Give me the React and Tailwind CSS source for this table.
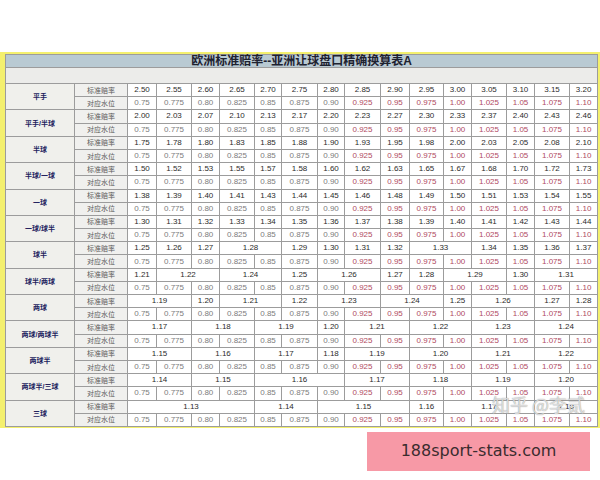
import React from "react";

const water = ["0.75", "0.775", "0.80", "0.825", "0.85", "0.875", "0.90", "0.925", "0.95", "0.975", "1.00", "1.025", "1.05", "1.075", "1.10"];

const colWidths = [69, 53, 29, 35, 28, 35, 27, 36, 27, 36, 29, 34, 28, 35, 28, 35, 28];

// "1.28:2" means the value spans two columns
const groups = [
  { label: "平手", odds: "2.50 2.55 2.60 2.65 2.70 2.75 2.80 2.85 2.90 2.95 3.00 3.05 3.10 3.15 3.20" },
  { label: "平手/半球", odds: "2.00 2.03 2.07 2.10 2.13 2.17 2.20 2.23 2.27 2.30 2.33 2.37 2.40 2.43 2.46" },
  { label: "半球", odds: "1.75 1.78 1.80 1.83 1.85 1.88 1.90 1.93 1.95 1.98 2.00 2.03 2.05 2.08 2.10" },
  { label: "半球/一球", odds: "1.50 1.52 1.53 1.55 1.57 1.58 1.60 1.62 1.63 1.65 1.67 1.68 1.70 1.72 1.73" },
  { label: "一球", odds: "1.38 1.39 1.40 1.41 1.43 1.44 1.45 1.46 1.48 1.49 1.50 1.51 1.53 1.54 1.55" },
  { label: "一球/球半", odds: "1.30 1.31 1.32 1.33 1.34 1.35 1.36 1.37 1.38 1.39 1.40 1.41 1.42 1.43 1.44" },
  { label: "球半", odds: "1.25 1.26 1.27 1.28:2 1.29 1.30 1.31 1.32 1.33:2 1.34 1.35 1.36 1.37" },
  { label: "球半/两球", odds: "1.21 1.22:2 1.24:2 1.25 1.26:2 1.27 1.28 1.29:2 1.30 1.31:2" },
  { label: "两球", odds: "1.19:2 1.20 1.21:2 1.22 1.23:2 1.24:2 1.25 1.26:2 1.27 1.28" },
  { label: "两球/两球半", odds: "1.17:2 1.18:2 1.19:2 1.20 1.21:2 1.22:2 1.23:2 1.24:2" },
  { label: "两球半", odds: "1.15:2 1.16:2 1.17:2 1.18 1.19:2 1.20:2 1.21:2 1.22:2" },
  { label: "两球半/三球", odds: "1.14:2 1.15:2 1.16:3 1.17:2 1.18:2 1.19:2 1.20:2" },
  { label: "三球", odds: "1.13:4 1.14:2 1.15:3 1.16 1.17:3 1.18:2" },
];

const cell = "border border-[#9c9c9c] p-0 text-center leading-none";

const App = () => {
  return (
    <div className="relative w-[600px] h-[480px] bg-white overflow-hidden font-['Liberation_Sans','Noto_Sans_CJK_SC',sans-serif]">
      <div className="pt-[52px]">
        {/* yellow frame */}
        <div className="bg-[#f4f06e] pl-[5px] pr-[3px] pt-[2px] pb-px">
          <table className="table-fixed border-collapse w-[592px] bg-white">
            <colgroup>
              {colWidths.map((w, i) => (
                <col key={i} style={{ width: w }} />
              ))}
            </colgroup>
            <tbody>
              <tr className="h-[13px]">
                <td colSpan={17} className={`${cell} bg-[#b9cad3] text-[12px] font-bold text-[#1e2230]`}>
                  欧洲标准赔率--亚洲让球盘口精确换算表A
                </td>
              </tr>
              <tr className="h-[16px]">
                <td colSpan={17} className={`${cell} bg-[#ececea]`}></td>
              </tr>

              {groups.map((g) => (
                <React.Fragment key={g.label}>
                  <tr className="h-[13.2px]">
                    <td rowSpan={2} className={`${cell} bg-[#f0f0ec] text-[7px] font-bold text-[#23235e]`}>
                      {g.label}
                    </td>
                    <td className={`${cell} bg-[#f0f0ee] text-[7px] text-[#5a5a5a]`}>标准赔率</td>
                    {g.odds.split(" ").map((o, i) => {
                      const [v, span] = o.split(":");
                      return (
                        <td key={i} colSpan={span ? Number(span) : 1} className={`${cell} text-[8px] text-[#2c2c2c]`}>
                          {v}
                        </td>
                      );
                    })}
                  </tr>
                  <tr className="h-[13.2px]">
                    <td className={`${cell} bg-[#f0f0ee] text-[7px] text-[#5a5a5a]`}>对应水位</td>
                    {water.map((w, i) => (
                      <td key={i} className={`${cell} text-[8px] ${i < 7 ? "text-[#7c7c7c]" : "text-[#b04a62]"}`}>
                        {w}
                      </td>
                    ))}
                  </tr>
                </React.Fragment>
              ))}
            </tbody>
          </table>
        </div>

        {/* site tag */}
        <div className="mt-[4px] ml-[367px] w-[223px] h-[39px] bg-[#f799a6] flex items-center justify-center">
          <span className="text-[16px] text-[#3a2c2e] font-['DejaVu_Sans',sans-serif]">188sport-stats.com</span>
        </div>
      </div>

      {/* watermark */}
      <div className="absolute left-[492px] top-[391px] text-[18px] text-white/70 font-['Noto_Sans_CJK_SC',sans-serif] [text-shadow:0_0_1px_#777]">
        知乎 @李贰
      </div>
    </div>
  );
};

export default App;
